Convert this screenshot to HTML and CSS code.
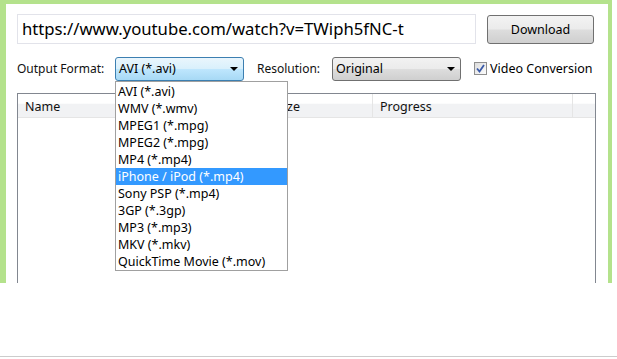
FILE: index.html
```html
<!DOCTYPE html>
<html>
<head>
<meta charset="utf-8">
<link rel="stylesheet" href="styles.css">
</head>
<body>
<div class="frame">
  <div class="row-url">
    <div class="url">https://www.youtube.com/watch?v=TWiph5fNC-t</div>
    <div class="btn">Download</div>
  </div>
  <div class="row-opts">
    <span class="lbl">Output Format:</span>
    <div class="combo combo-focus">
      <span>AVI (*.avi)</span>
      <span class="arrow"></span>
      <ul class="list">
        <li>AVI (*.avi)</li>
        <li>WMV (*.wmv)</li>
        <li>MPEG1 (*.mpg)</li>
        <li>MPEG2 (*.mpg)</li>
        <li>MP4 (*.mp4)</li>
        <li class="sel">iPhone / iPod (*.mp4)</li>
        <li>Sony PSP (*.mp4)</li>
        <li>3GP (*.3gp)</li>
        <li>MP3 (*.mp3)</li>
        <li>MKV (*.mkv)</li>
        <li>QuickTime Movie (*.mov)</li>
      </ul>
    </div>
    <span class="lbl lbl-res">Resolution:</span>
    <div class="combo">
      <span>Original</span>
      <span class="arrow"></span>
    </div>
    <label class="chk">
      <span class="box"><svg width="9" height="9" viewBox="0 0 9 9"><path d="M1 4.5 L3.5 7.5 L8 1" fill="none" stroke="#3a5aa8" stroke-width="1.8"/></svg></span>
      Video Conversion
    </label>
  </div>
  <div class="table">
    <div class="thead">
      <div class="th c-name">Name</div>
      <div class="th c-size">Size</div>
      <div class="th c-prog">Progress</div>
      <div class="th c-last"></div>
    </div>
  </div>
</div>
<div class="bottom-line"></div>
</body>
</html>
```
FILE: styles.css
```css
html, body {
  margin: 0;
  padding: 0;
  background: #fff;
}
body {
  width: 617px;
  height: 359px;
  position: relative;
  font-family: "Noto Sans", "Open Sans", sans-serif;
  font-size: 12px;
  color: #1a1a1a;
}
.frame {
  box-sizing: border-box;
  width: 612px;
  height: 283px;
  border-left: 6px solid #b4e28c;
  border-top: 4px solid #b4e28c;
  border-right: 4px solid #b4e28c;
  padding: 10px 0 0 11px;
  display: flex;
  flex-direction: column;
}
.row-url {
  display: flex;
  align-items: flex-start;
  gap: 11px;
}
.url {
  box-sizing: border-box;
  width: 459px;
  height: 30px;
  border: 1px solid #e2e3ea;
  padding: 0 0 0 4px;
  font-size: 16.7px;
  line-height: 28px;
  color: #000;
  white-space: nowrap;
}
.btn {
  box-sizing: border-box;
  margin-top: 1px;
  width: 107px;
  height: 29px;
  border: 1px solid #707070;
  border-radius: 3px;
  background: linear-gradient(#f3f3f3 0%, #ebebeb 48%, #dddddd 52%, #cfcfcf 100%);
  text-align: center;
  line-height: 27px;
  font-size: 12.5px;
  color: #000;
}
.row-opts {
  display: flex;
  align-items: center;
  margin-top: 12px;
  height: 25px;
}
.lbl {
  width: 98px;
  flex: none;
  color: #111;
}
.lbl-res {
  margin-left: 13px;
  width: 75px;
}
.combo {
  position: relative;
  box-sizing: border-box;
  width: 129px;
  height: 24px;
  border: 1px solid #707070;
  border-radius: 3px;
  background: linear-gradient(#f2f2f2 0%, #ebebeb 48%, #dddddd 52%, #cfcfcf 100%);
  padding-left: 3px;
  line-height: 20px;
  font-size: 12.5px;
  color: #000;
  display: flex;
  justify-content: space-between;
  align-items: center;
}
.combo-focus {
  border-color: #3c7fb1;
  background: linear-gradient(#eaf6fd 0%, #d9f0fc 48%, #bee6fd 52%, #a7d9f5 100%);
}
.arrow {
  width: 0;
  height: 0;
  border-left: 4px solid transparent;
  border-right: 4px solid transparent;
  border-top: 4px solid #000;
  margin-right: 5px;
}
.chk {
  margin-left: 13px;
  display: flex;
  align-items: center;
  gap: 3px;
  color: #000;
  font-size: 12.5px;
}
.box {
  box-sizing: border-box;
  width: 13px;
  height: 13px;
  border: 1px solid #8f8f8f;
  background: linear-gradient(135deg, #dcdcdc, #fdfdfd);
  display: flex;
  align-items: center;
  justify-content: center;
}
.list {
  position: absolute;
  left: -1px;
  top: 23px;
  box-sizing: border-box;
  width: 173px;
  margin: 0;
  padding: 1px 0 0 0;
  list-style: none;
  background: #fff;
  border: 1px solid #a0a0a0;
  z-index: 5;
}
.list li {
  height: 17px;
  line-height: 17px;
  padding-left: 2px;
  white-space: nowrap;
  color: #000;
}
.list li.sel {
  background: #3399ff;
  color: #fff;
}
.table {
  margin-top: 12px;
  width: 579px;
  flex: 1;
  box-sizing: border-box;
  border: 1px solid #828790;
  border-bottom: none;
}
.thead {
  display: flex;
  height: 23px;
  background: linear-gradient(#ffffff 0%, #ffffff 40%, #f1f2f4 45%, #f1f2f4 100%);
  border-bottom: 1px solid #e5e5e5;
}
.th {
  box-sizing: border-box;
  line-height: 23px;
  padding: 1px 0 0 7px;
  border-right: 1px solid #e5e5e5;
  font-size: 12.5px;
  color: #111;
}
.c-name { width: 252px; }
.c-size { width: 103px; }
.c-prog { width: 200px; }
.c-last { flex: 1; border-right: none; }
.bottom-line {
  position: absolute;
  left: 0;
  top: 356px;
  width: 617px;
  height: 0;
  border-top: 1px solid #cccccc;
}
```
